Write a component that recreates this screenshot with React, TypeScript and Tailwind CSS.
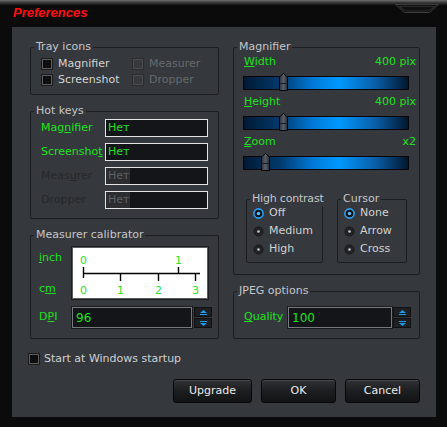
import React from "react";

const GREEN = "text-[#1be31b]";

const Group = ({ title, className = "", legendClass = "", children }: { title: string; className?: string; legendClass?: string; children?: React.ReactNode }) => (
    <fieldset className={`min-w-0 border border-[#1c1e21] rounded-[2px] ${className}`}>
        <legend className={`ml-[3px] px-[2px] leading-[14px] text-[#c4c6c8] whitespace-nowrap ${legendClass}`}>{title}</legend>
        {children}
    </fieldset>
);

const CheckBox = ({ label, disabled = false }: { label: string; disabled?: boolean }) => (
    <div className="flex items-center h-[16px] gap-[5px]">
        <span
            className={`w-[12px] h-[12px] border ${disabled
                ? "border-[#2a2c2f] bg-[#36383b] shadow-[inset_0_0_0_1px_#494b4e]"
                : "border-[#1a1a1a] bg-[#0e0e0e] shadow-[inset_0_0_0_1px_#5e5e5e]"
                }`}
        />
        <span className={disabled ? "text-[#66696c]" : "text-[#d4d4d4]"}>{label}</span>
    </div>
);

const HotKeyRow = ({ label, disabled = false }: { label: React.ReactNode; disabled?: boolean }) => (
    <div className="flex items-center h-[18px]">
        <span className={`w-[64px] ${disabled ? "text-[#26282b]" : GREEN}`}>{label}</span>
        <div className="w-[103px] h-[18px] border border-[#e4e4e4] bg-[#141518] flex items-center">
            {disabled ? (
                <span className="h-full flex items-center pl-[2px] pr-[1px] bg-[#2b2d30] text-[#5d6064]">Нет</span>
            ) : (
                <span className={`pl-[2px] ${GREEN}`}>Нет</span>
            )}
        </div>
    </div>
);

const Spin = () => (
    <div className="flex flex-col gap-px">
        {[0, 1].map((i) => (
            <div key={i} className="w-[18px] h-[10px] bg-[#1d1f22] border border-[#101113] flex items-center justify-center">
                <svg width="7" height="5" viewBox="0 0 7 5">
                    {i === 0 ? (
                        <>
                            <polygon points="3.5,0 7,3 0,3" fill="#1e9cf0" />
                            <rect x="0" y="4" width="7" height="1" fill="#1e9cf0" />
                        </>
                    ) : (
                        <>
                            <rect x="0" y="0" width="7" height="1" fill="#1e9cf0" />
                            <polygon points="0,2 7,2 3.5,5" fill="#1e9cf0" />
                        </>
                    )}
                </svg>
            </div>
        ))}
    </div>
);

const NumberInput = ({ value, width }: { value: string; width: string }) => (
    <div className={`${width} h-[21px] border border-[#75787c] outline outline-1 outline-[#1a1b1d] bg-[#141518] flex items-center pl-[3px] text-[12px] ${GREEN}`}>
        {value}
    </div>
);

const Slider = ({ thumb }: { thumb: number }) => (
    <div className="relative w-[166px] h-[14px] border border-[#050505] bg-[linear-gradient(90deg,#001a33_0%,#023a6c_22%,#0079d6_42%,#0098ff_58%,#0a5fa8_80%,#00172d_100%)]">
        <svg className="absolute top-[-4px]" style={{ left: thumb }} width="9" height="18" viewBox="0 0 9 18">
            <defs>
                <linearGradient id="th" x1="0" y1="0" x2="1" y2="0">
                    <stop offset="0" stopColor="#2a3038" />
                    <stop offset="0.5" stopColor="#56606c" />
                    <stop offset="1" stopColor="#252a31" />
                </linearGradient>
            </defs>
            <polygon points="4.5,0.5 8.5,4 8.5,17.5 0.5,17.5 0.5,4" fill="url(#th)" stroke="#050607" strokeWidth="1" />
            <line x1="1.5" y1="10.5" x2="7.5" y2="10.5" stroke="#15181c" strokeWidth="1" />
        </svg>
    </div>
);

const SliderRow = ({ label, value, thumb }: { label: React.ReactNode; value: string; thumb: number }) => (
    <div className="flex flex-col">
        <div className={`flex justify-between h-[14px] leading-[14px] pl-px pr-[3px] ${GREEN}`}>
            <span>{label}</span>
            <span>{value}</span>
        </div>
        <div className="mt-[7px]">
            <Slider thumb={thumb} />
        </div>
    </div>
);

const Radio = ({ label, checked = false }: { label: string; checked?: boolean }) => (
    <div className="flex items-center h-[18px] gap-[5px]">
        <svg width="11" height="11" viewBox="0 0 11 11">
            {checked ? (
                <>
                    <circle cx="5.5" cy="5.5" r="4.6" fill="#111214" stroke="#2a9ff5" strokeWidth="1.6" />
                    <circle cx="5.5" cy="5.5" r="1.7" fill="#5cbaff" />
                </>
            ) : (
                <>
                    <circle cx="5.5" cy="5.5" r="5" fill="#1a1b1d" />
                    <circle cx="5.5" cy="5.5" r="4" fill="#222326" />
                    <circle cx="5.5" cy="5.5" r="1.3" fill="#c8c8c8" />
                </>
            )}
        </svg>
        <span className="text-[#d2d2d2]">{label}</span>
    </div>
);

const Ruler = () => (
    <div className="w-[136px] h-[52px] bg-white border border-[#5a5c60] outline outline-1 outline-[#1c1d1f]">
        <svg width="134" height="50" viewBox="0 0 134 50" fontFamily="DejaVu Sans, sans-serif" fontSize="11">
            <g fill="#2ae02a">
                <text x="7" y="16">0</text>
                <text x="102" y="16">1</text>
                <text x="7" y="46">0</text>
                <text x="44" y="46">1</text>
                <text x="82" y="46">2</text>
                <text x="119" y="46">3</text>
            </g>
            <g stroke="#000" strokeWidth="1.4">
                <line x1="10" y1="25.5" x2="127" y2="25.5" />
                <line x1="10.5" y1="19" x2="10.5" y2="30" />
                <line x1="105.5" y1="19" x2="105.5" y2="26" />
                <line x1="47.5" y1="25" x2="47.5" y2="33" />
                <line x1="85.5" y1="25" x2="85.5" y2="33" />
                <line x1="122.5" y1="25" x2="122.5" y2="33" />
            </g>
        </svg>
    </div>
);

const Button = ({ label, width }: { label: string; width: string }) => (
    <button className={`${width} h-[24px] rounded-[3px] border border-[#070707] bg-[linear-gradient(180deg,#303235_0%,#1d1f21_45%,#121314_100%)] shadow-[inset_0_1px_0_#45484c] text-[#ececec] text-[11px]`}>
        {label}
    </button>
);

export default function App() {
    return (
        <div className="relative w-[447px] h-[427px] overflow-hidden bg-[#0b0b0b] font-['DejaVu_Sans',sans-serif] text-[11px]">
            <div className="h-[5px] bg-[linear-gradient(180deg,#6e6e6e_0%,#3a3a3a_50%,#151515_100%)]" />
            <div className="h-[22px] pl-[13px] pt-px leading-[14px] text-[#ff1010] text-[13px] font-bold italic font-['Liberation_Sans',sans-serif]">
                Preferences
            </div>
            <svg className="absolute left-[393px] top-[3px]" width="48" height="11" viewBox="0 0 48 11">
                <polygon points="2.5,1.5 45.5,1.5 36.5,9.5 11.5,9.5" fill="#101010" stroke="#3c3c3c" strokeWidth="1" />
                <polygon points="6,3.5 42,3.5 35,8 13,8" fill="none" stroke="#2a2a2a" strokeWidth="1" />
            </svg>

            <div className="ml-[12px] w-[424px] h-[390px] bg-[#35383d] pl-[16px] pr-[16px] pt-[13px]">
                <div className="flex gap-[14px] ml-[2px]">
                    {/* left column */}
                    <div className="w-[190px] flex flex-col gap-[9px]">
                        <Group title="Tray icons" className="h-[55px]">
                            <div className="grid grid-cols-[91px_1fr] pl-[10px] pt-[2px]">
                                <CheckBox label="Magnifier" />
                                <CheckBox label="Measurer" disabled />
                                <CheckBox label="Screenshot" />
                                <CheckBox label="Dropper" disabled />
                            </div>
                        </Group>

                        <Group title="Hot keys" className="h-[115px]">
                            <div className="flex flex-col gap-[6px] pl-[10px] pt-px">
                                <HotKeyRow label={<>Mag<u>n</u>ifier</>} />
                                <HotKeyRow label={<>Screensho<u>t</u></>} />
                                <HotKeyRow label={<>Meas<u>u</u>rer</>} disabled />
                                <HotKeyRow label="Dropper" disabled />
                            </div>
                        </Group>

                        <Group title="Measurer calibrator" className="h-[111px]">
                            <div className="flex flex-col pl-[8px] pt-[5px]">
                                <div className="flex">
                                    <div className={`w-[33px] flex flex-col pt-[4px] ${GREEN}`}>
                                        <span className="h-[14px] leading-[14px]"><u>i</u>nch</span>
                                        <span className="h-[14px] leading-[14px] mt-[17px]">c<u>m</u></span>
                                    </div>
                                    <Ruler />
                                </div>
                                <div className="flex items-center mt-[8px]">
                                    <span className={`w-[33px] ${GREEN}`}>D<u>P</u>I</span>
                                    <NumberInput value="96" width="w-[120px]" />
                                    <div className="ml-[2px]">
                                        <Spin />
                                    </div>
                                </div>
                            </div>
                        </Group>
                    </div>

                    {/* right column */}
                    <div className="w-[188px] flex flex-col gap-[9px]">
                        <Group title="Magnifier" className="h-[235px]">
                            <div className="flex flex-col gap-[5px] pl-[9px] pt-px">
                                <SliderRow label={<><u>W</u>idth</>} value="400 pix" thumb={35} />
                                <SliderRow label={<><u>H</u>eight</>} value="400 pix" thumb={35} />
                                <SliderRow label={<><u>Z</u>oom</>} value="x2" thumb={17} />
                                <div className="flex gap-[14px] ml-[3px] mt-[17px]">
                                    <Group title="High contrast" className="w-[77px] h-[71px] shrink-0" legendClass="tracking-[-0.2px]">
                                        <div className="flex flex-col pl-[6px] -mt-[2px]">
                                            <Radio label="Off" checked />
                                            <Radio label="Medium" />
                                            <Radio label="High" />
                                        </div>
                                    </Group>
                                    <Group title="Cursor" className="w-[70px] h-[71px] shrink-0">
                                        <div className="flex flex-col pl-[6px] -mt-[2px]">
                                            <Radio label="None" checked />
                                            <Radio label="Arrow" />
                                            <Radio label="Cross" />
                                        </div>
                                    </Group>
                                </div>
                            </div>
                        </Group>

                        <Group title="JPEG options" className="h-[55px]">
                            <div className="flex items-center pl-[10px] pt-[9px]">
                                <span className={`w-[44px] ${GREEN}`}><u>Q</u>uality</span>
                                <NumberInput value="100" width="w-[104px]" />
                                <div className="ml-px">
                                    <Spin />
                                </div>
                            </div>
                        </Group>
                    </div>
                </div>

                <div className="mt-[14px]">
                    <div className="flex items-center h-[12px] gap-[4px]">
                        <span className="w-[12px] h-[12px] border border-[#1a1a1a] bg-[#0e0e0e] shadow-[inset_0_0_0_1px_#5e5e5e]" />
                        <span className="text-[#d0d0d0]">Start at Windows startup</span>
                    </div>
                </div>

                <div className="flex justify-end gap-[9px] mt-[14px]">
                    <Button label="Upgrade" width="w-[79px]" />
                    <Button label="OK" width="w-[75px]" />
                    <Button label="Cancel" width="w-[75px]" />
                </div>
            </div>
        </div>
    );
}
